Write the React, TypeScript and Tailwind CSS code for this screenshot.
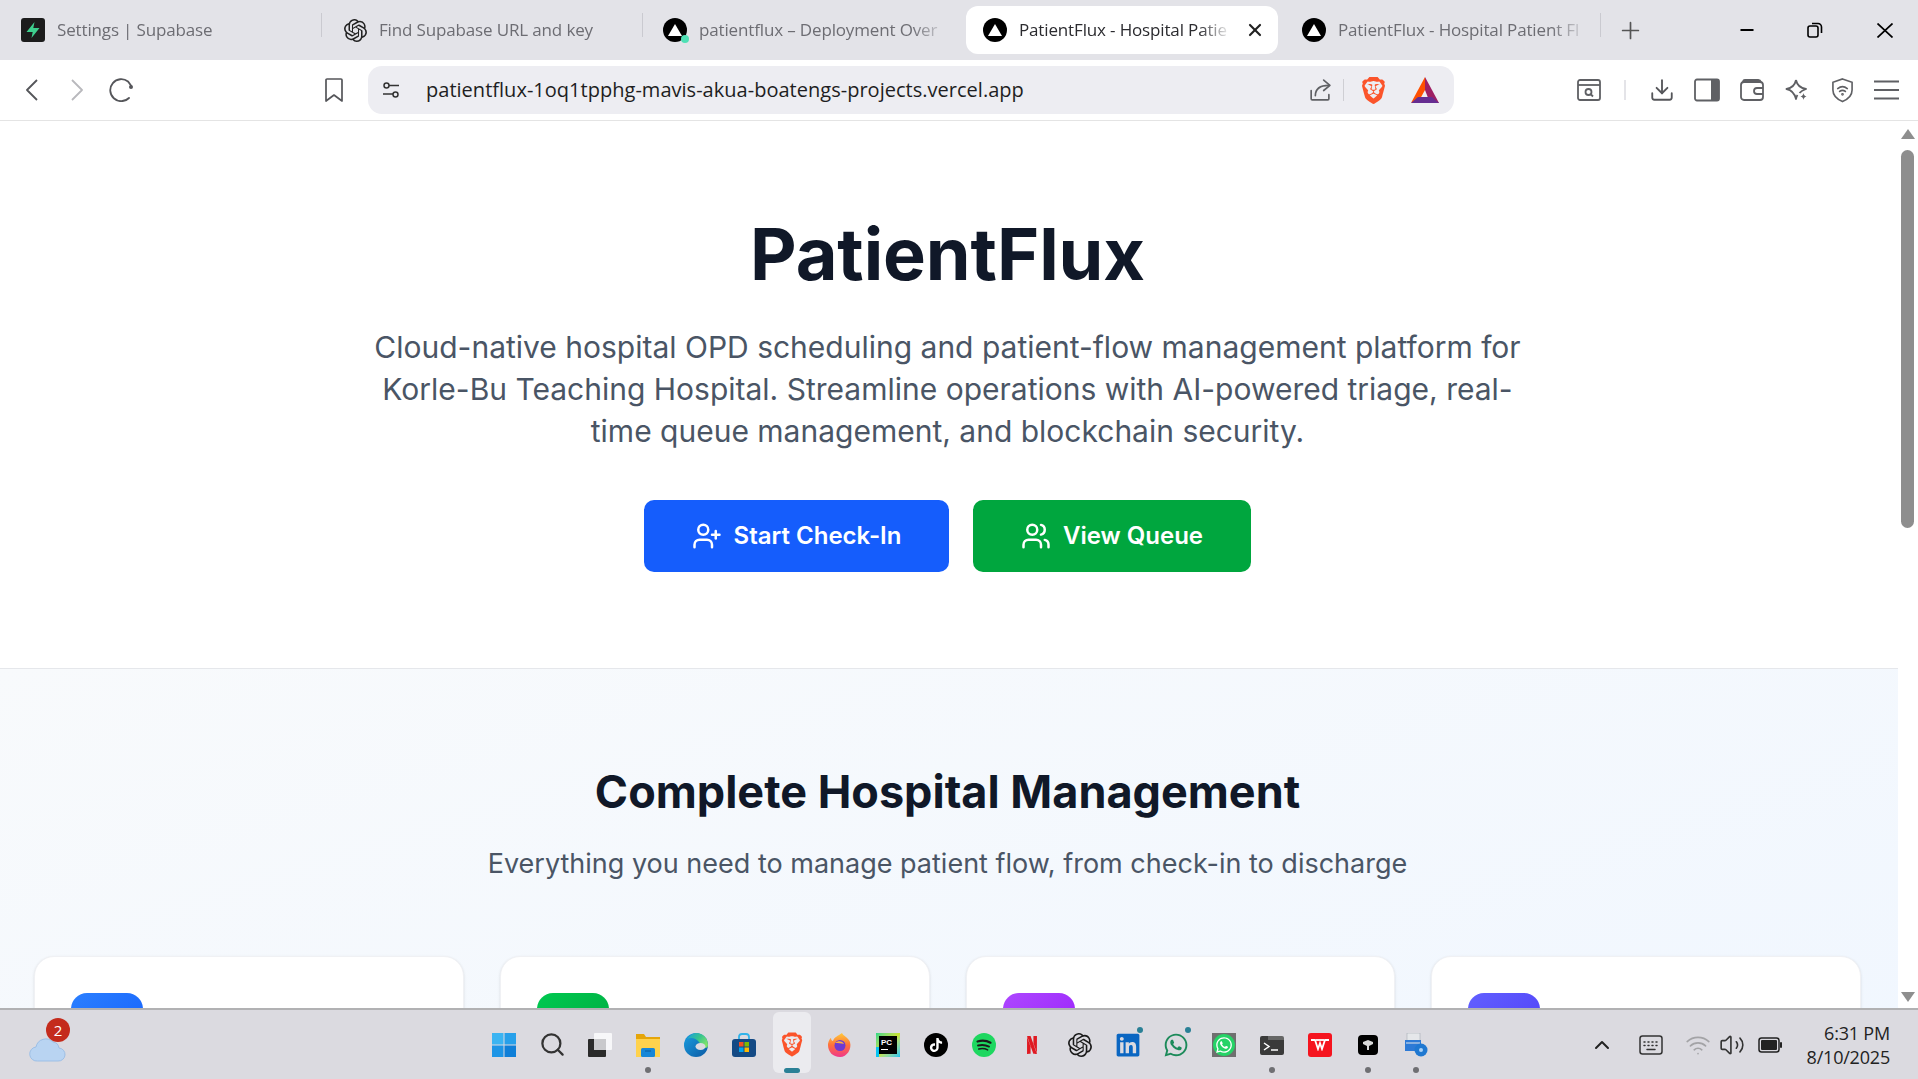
import React from "react";
import { X, Plus, Minus, Download, UserPlus, Users, Search, ChevronUp, Volume2, Wifi } from "lucide-react";
import { SiNetflix, SiOpenai, SiTiktok, SiBrave } from "react-icons/si";
import { FaWhatsapp, FaLinkedin } from "react-icons/fa";

const Vercel = ({ dot }: { dot?: boolean }) => (
  <span className="relative shrink-0 w-6 h-6">
    <svg viewBox="0 0 24 24" className="w-6 h-6">
      <circle cx="12" cy="12" r="12" fill="#000" />
      <path d="M12 6 19 18H5Z" fill="#fff" />
    </svg>
    {dot && <span className="absolute right-[-2px] bottom-[-1px] w-2 h-2 rounded-full bg-[#4fe0b5]" />}
  </span>
);

const Supabase = () => (
  <svg viewBox="0 0 24 24" className="w-6 h-6 shrink-0">
    <rect width="24" height="24" rx="3" fill="#1c1c1c" />
    <path d="M13.500 4 5.500 14h6.200L10.500 20l8-10h-6.200Z" fill="#3ecf8e" />
  </svg>
);

function Tab({ icon, title, w, sep = true }: { icon: React.ReactNode; title: string; w: string; sep?: boolean }) {
  return (
    <div className={`${w} h-12 flex items-center shrink-0 relative`}>
      {icon}
      <span className="ml-3 w-[250px] whitespace-nowrap overflow-hidden text-[17px] font-['Open_Sans',sans-serif] tracking-[-0.15px] text-[#6d6d73] [mask-image:linear-gradient(to_right,black_85%,transparent)]">{title}</span>
      {sep && <span className="absolute right-0 top-[7px] w-px h-6 bg-[#cacad0]" />}
    </div>
  );
}

const G = "#5f6064";

const ToolIcon = ({ children, className = "" }: { children: React.ReactNode; className?: string }) => (
  <span className={`shrink-0 flex items-center justify-center ${className}`}>{children}</span>
);

const BraveIcon = ({ s = 27 }: { s?: number }) => <SiBrave size={s} color="#fb542b" />;

const Bat = () => (
  <svg viewBox="0 0 28 26" className="w-7 h-[26px]">
    <path d="M14 0 28 26H19L14 13Z" fill="#9e1f63" />
    <path d="M14 0 0 26 9 22 14 13Z" fill="#ff5000" />
    <path d="M0 26 7 20H21L28 26Z" fill="#662d91" />
  </svg>
);

function TaskIcon({ children, dot, badge, active }: { children: React.ReactNode; dot?: boolean; badge?: boolean; active?: boolean }) {
  return (
    <div className="relative w-12 h-full flex items-center justify-center shrink-0">
      {active && <span className="absolute left-[5px] right-[5px] top-[2px] bottom-[6px] rounded-md bg-[#ebebef]" />}
      {active && <span className="absolute left-4 right-4 bottom-[6px] h-[5px] rounded-full bg-[#2a8096]" />}
      <span className="relative flex items-center justify-center w-6 h-6">{children}</span>
      {dot && <span className="absolute left-[21px] bottom-[6px] w-[6px] h-[6px] rounded-full bg-[#6f6f73]" />}
      {badge && <span className="absolute left-[33px] top-[17px] w-[6px] h-[6px] rounded-full bg-[#2a8096]" />}
    </div>
  );
}

const cards = [
  "from-[#2b7fff] to-[#155dfc]",
  "from-[#00c950] to-[#00a63e]",
  "from-[#ad46ff] to-[#9810fa]",
  "from-[#615fff] to-[#4f39f6]",
];

export default function App() {
  return (
    <div className="h-screen w-full overflow-hidden flex flex-col bg-white font-['Inter',sans-serif]">
      {/* tab strip */}
      <div className="h-[60px] shrink-0 bg-[#e3e3e8] flex items-center pl-[21px] pr-0">
        <Tab w="w-[301px]" icon={<Supabase />} title="Settings | Supabase" />
        <div className="w-[22px] shrink-0" />
        <Tab w="w-[299px]" icon={<SiOpenai size={23} color="#222" />} title="Find Supabase URL and key" />
        <div className="w-[20px] shrink-0" />
        <Tab w="w-[300px]" icon={<Vercel dot />} title="patientflux – Deployment Over" sep={false} />
        <div className="w-[3px] shrink-0" />
        <div className="w-[312px] h-12 shrink-0 bg-white rounded-xl pl-[17px] flex items-center">
          <Vercel />
          <span className="ml-3 w-[212px] whitespace-nowrap overflow-hidden text-[17px] text-[#2b2b2f] font-['Open_Sans',sans-serif] tracking-[-0.15px] [mask-image:linear-gradient(to_right,black_85%,transparent)]">PatientFlux - Hospital Patie</span>
          <X className="ml-[14px] w-[20px] h-[20px] text-[#222]" strokeWidth={2.6} />
        </div>
        <div className="w-6 shrink-0" />
        <Tab w="w-[299px]" icon={<Vercel />} title="PatientFlux - Hospital Patient Fl" />
        <Plus className="ml-[16px] w-[27px] h-[27px] text-[#555]" strokeWidth={1.5} />
        <Minus className="ml-[93px] w-[20px] h-[20px] text-black" strokeWidth={2.2} />
        <svg viewBox="0 0 16 16" className="ml-[50px] w-[16px] h-[16px]" fill="none" stroke="#000" strokeWidth="1.6">
          <rect x="1" y="4" width="10" height="11" rx="2" />
          <path d="M5 1.500h6a3.500 3.500 0 0 1 3.500 3.500v6" />
        </svg>
        <svg viewBox="0 0 16 15" className="ml-[54px] w-4 h-[15px]" fill="none" stroke="#000" strokeWidth="1.7"><path d="m.5.500 15 14M15.500.500l-15 14" /></svg>
      </div>

      {/* toolbar */}
      <div className="h-[61px] shrink-0 bg-white border-b border-[#e4e4e4] flex items-center pl-[26px]">
        <svg viewBox="0 0 12 22" className="w-3 h-[22px] shrink-0" fill="none" stroke="#55565a" strokeWidth="1.8" strokeLinejoin="round"><path d="M11 1 1 11l10 10" /></svg>
        <svg viewBox="0 0 12 22" className="ml-[33px] w-3 h-[22px] shrink-0" fill="none" stroke="#b9b9bd" strokeWidth="1.8" strokeLinejoin="round"><path d="m1 1 10 10L1 21" /></svg>
        <svg viewBox="0 0 26 24" className="ml-[26px] w-[26px] h-6 shrink-0" fill="none" stroke="#55565a" strokeWidth="1.8" strokeLinecap="round">
          <path d="M20 20a11 11 0 1 1-1-16.500l3 4" /><circle cx="22" cy="9" r="2" fill="#55565a" stroke="none" />
        </svg>
        <svg viewBox="0 0 18 24" className="ml-[190px] w-[18px] h-6 shrink-0" fill="none" stroke="#55565a" strokeWidth="1.7" strokeLinejoin="round"><path d="M2 1h14a1 1 0 0 1 1 1v21l-8-6-8 6V2a1 1 0 0 1 1-1Z" /></svg>
        <div className="ml-[25px] w-[1086px] h-12 rounded-[14px] bg-[#ededf2] flex items-center shrink-0">
          <svg viewBox="0 0 18 18" className="ml-[14px] w-[18px] h-[18px] shrink-0" fill="none" stroke="#333" strokeWidth="1.5">
            <circle cx="4.500" cy="4.500" r="2.500" /><path d="M7 4.500h10M1 13h10" /><circle cx="13.500" cy="13.500" r="2.500" />
          </svg>
          <span className="ml-[26px] w-[640px] text-[20px] text-[#1e1e22] whitespace-nowrap font-['Open_Sans',sans-serif] tracking-[0.02px]">patientflux-1oq1tpphg-mavis-akua-boatengs-projects.vercel.app</span>
          <svg viewBox="0 0 24 24" className="ml-[241px] w-[25px] h-[25px] shrink-0" fill="none" stroke={G} strokeWidth="1.6" strokeLinecap="round" strokeLinejoin="round">
            <path d="M4 12v8a1 1 0 0 0 1 1h15a1 1 0 0 0 1-1v-4" /><path d="M8 17c0-6 4-10 13-10" /><path d="M16 2l6 5-6 5" />
          </svg>
          <span className="ml-[11px] w-px h-[22px] bg-[#cfcfd4] shrink-0" />
          <span className="ml-4 flex shrink-0"><BraveIcon /></span>
          <span className="ml-[24px] flex shrink-0"><Bat /></span>
        </div>
        <ToolIcon className="ml-[123px]">
          <svg viewBox="0 0 24 24" className="w-6 h-6" fill="none" stroke={G} strokeWidth="1.8">
            <rect x="1" y="2" width="22" height="20" rx="2" /><path d="M1 7h22" /><circle cx="11.500" cy="14" r="3" /><path d="m14 16.500 2 2" />
          </svg>
        </ToolIcon>
        <span className="ml-[23px] w-[2px] h-[20px] bg-[#e4e4e8] shrink-0" />
        <Download className="ml-[23px] w-[26px] h-[26px] text-[#55565a] shrink-0" strokeWidth={1.7} />
        <svg viewBox="0 0 26 24" className="ml-[19px] w-[26px] h-6 shrink-0">
          <rect x="1" y="1.500" width="24" height="21" rx="2" fill="none" stroke={G} strokeWidth="1.8" />
          <path d="M17 1.500h6a2 2 0 0 1 2 2v17a2 2 0 0 1-2 2h-6Z" fill={G} />
        </svg>
        <svg viewBox="0 0 24 24" className="ml-[20px] w-6 h-6 shrink-0" fill="none" stroke={G} strokeWidth="1.8">
          <rect x="1" y="4" width="22" height="18" rx="3" /><path d="M3 4V3.500A2 2 0 0 1 5 2h13a3 3 0 0 1 3 2" /><path d="M23 10h-6a3 3 0 0 0 0 6h6" />
        </svg>
        <svg viewBox="0 0 24 24" className="ml-[21px] w-6 h-[26px] shrink-0" fill="none" stroke={G} strokeWidth="1.8" strokeLinejoin="round">
          <path d="M11 2c1 5 4 8 10 9-3 1-5 2-6.500 4M11 2c-1 5-4 8-9.500 9 5 1 8 4 9.500 10 .3-1.500.8-3 1.500-4" />
          <path d="M18.500 15c.3 2 1 3 3 3.500-2 .5-2.700 1.500-3 3.500-.3-2-1-3-3-3.500 2-.5 2.700-1.500 3-3.500Z" fill={G} stroke="none" />
        </svg>
        <svg viewBox="0 0 24 26" className="ml-[22px] w-[23px] h-[26px] shrink-0" fill="none" stroke={G} strokeWidth="1.7" strokeLinecap="round">
          <path d="M12 1.500 22 5v8c0 6-4 9.500-10 12C6 22.500 2 19 2 13V5Z" />
          <path d="M7 11.500c3-2.500 7-2.500 10 0M9 14.500c2-1.500 4-1.500 6 0" /><circle cx="12" cy="17.500" r=".6" />
        </svg>
        <svg viewBox="0 0 25 20" className="ml-[20px] w-[25px] h-[20px] shrink-0" fill="none" stroke={G} strokeWidth="2"><path d="M0 1.500h25M0 10h25M0 18.500h25" /></svg>
      </div>

      {/* page */}
      <div className="flex-1 min-h-0 flex overflow-hidden">
        <main className="flex-1 min-w-0 overflow-hidden">
          <section className="h-[548px] border-b border-[#e5e7eb] bg-white flex flex-col items-center pt-[97px] pr-[3px]">
            <h1 className="text-[72px] leading-[72px] font-bold text-[#101828] tracking-[-0.1px]">PatientFlux</h1>
            <p className="mt-[36px] w-[1170px] text-center text-[30px] leading-[42px] text-[#4a5565]">
              Cloud-native hospital OPD scheduling and patient-flow management platform for Korle-Bu Teaching Hospital. Streamline operations with AI-powered triage, real-time queue management, and blockchain security.
            </p>
            <div className="mt-[48px] flex gap-6">
              <button className="w-[305px] h-[72px] rounded-[10px] bg-[#155dfc] text-white flex items-center justify-center gap-3 text-[24px] font-semibold">
                <UserPlus className="w-[30px] h-[30px]" strokeWidth={2} />Start Check-In
              </button>
              <button className="w-[278px] h-[72px] rounded-[10px] bg-[#00a63e] text-white flex items-center justify-center gap-3 text-[24px] font-semibold">
                <Users className="w-[30px] h-[30px]" strokeWidth={2} />View Queue
              </button>
            </div>
          </section>
          <section className="h-[600px] bg-gradient-to-br from-[#f8fafc] to-[#eff6ff] pl-[34px] pr-[37px] pt-[98px] flex flex-col items-center">
            <h2 className="text-[45px] leading-[50px] font-bold text-[#101828]">Complete Hospital Management</h2>
            <p className="mt-[29px] text-[27px] leading-[36px] text-[#4a5565]">Everything you need to manage patient flow, from check-in to discharge</p>
            <div className="mt-[74px] w-full grid grid-cols-4 gap-9">
              {cards.map((c) => (
                <div key={c} className="h-[300px] rounded-[20px] bg-white border border-[#f0f1f4] shadow-sm p-9">
                  <div className={`w-[72px] h-[72px] rounded-2xl bg-gradient-to-br ${c}`} />
                </div>
              ))}
            </div>
          </section>
        </main>
        {/* scrollbar */}
        <div className="w-5 shrink-0 bg-white flex flex-col items-center pt-[8px] pb-[6px]">
          <span className="w-0 h-0 border-x-[7px] border-x-transparent border-b-[10px] border-b-[#8e8e8e]" />
          <span className="mt-[11px] w-[13px] h-[378px] rounded-full bg-[#8e8e8e] -translate-x-px" />
          <span className="mt-auto w-0 h-0 border-x-[7px] border-x-transparent border-t-[10px] border-t-[#8e8e8e]" />
        </div>
      </div>

      {/* taskbar */}
      <div className="h-[71px] shrink-0 border-t-2 border-[#b1b1b3] bg-[#dbdae0] flex items-stretch">
        <div className="w-[480px] shrink-0 pl-[29px] flex items-center">
          <div className="relative w-[41px] h-[44px] mb-[10px]">
            <svg viewBox="0 0 36 26" className="absolute left-0 bottom-0 w-[37px] h-[26px]">
              <path d="M8 25a7 7 0 0 1-1.500-14 10 10 0 0 1 17-5 7 7 0 0 1 6 6 6.500 6.500 0 0 1-1 13Z" fill="#b9d4f2" stroke="#9dbfe6" strokeWidth="1" />
            </svg>
            <span className="absolute left-[17px] top-0 w-6 h-6 rounded-full bg-[#c42b1c] text-white text-[15px] leading-6 text-center font-['Open_Sans',sans-serif]">2</span>
          </div>
        </div>

        <TaskIcon>
          <svg viewBox="0 0 24 24" className="w-6 h-6">
            <path d="M0 0h11.500v11.500H0Z" fill="#3bb4f2" /><path d="M12.500 0H24v11.500H12.500Z" fill="#27a0ea" /><path d="M0 12.500h11.500V24H0Z" fill="#1d95e6" /><path d="M12.500 12.500H24V24H12.500Z" fill="#0f7fd8" />
          </svg>
        </TaskIcon>
        <TaskIcon><Search className="w-[27px] h-[27px] shrink-0 text-[#333]" strokeWidth={2} /></TaskIcon>
        <TaskIcon>
          <svg viewBox="0 0 24 24" className="w-6 h-6">
            <rect x="6" y="0" width="18" height="17" rx="1" fill="#f7f7f9" /><rect x="0" y="6" width="18" height="18" rx="1" fill="#2a2a2a" /><rect x="6" y="6" width="12" height="11" fill="#c9c9cc" />
          </svg>
        </TaskIcon>
        <TaskIcon dot>
          <svg viewBox="0 0 24 24" className="w-6 h-6">
            <path d="M0 1h8l2 3h14v20H0Z" fill="#e5a50a" /><path d="M0 6h24v18H0Z" fill="#ffd24d" /><rect x="5" y="15" width="14" height="9" rx="1.500" fill="#1787d8" /><path d="M9 18h6" stroke="#0d5a9c" strokeWidth="1" />
          </svg>
        </TaskIcon>
        <TaskIcon>
          <svg viewBox="0 0 24 24" className="w-6 h-6">
            <defs>
              <linearGradient id="e1" x1="0" y1="0" x2="1" y2="1"><stop offset="0" stopColor="#1a9fe0" /><stop offset="1" stopColor="#0c59a4" /></linearGradient>
              <linearGradient id="e2" x1="0" y1="0" x2="1" y2="0.600"><stop offset="0" stopColor="#1b9de2" /><stop offset=".55" stopColor="#35c48f" /><stop offset="1" stopColor="#7ee26a" /></linearGradient>
            </defs>
            <circle cx="12" cy="12" r="12" fill="url(#e1)" />
            <path d="M3 6C6 2 9 0 12 0c7 0 12 5 12 12 0 2-1 3-3 3-4 0-4-3-6-6C12 5 7 4 3 6Z" fill="url(#e2)" />
            <ellipse cx="16.500" cy="13.500" rx="5" ry="3.500" fill="#dbdae0" />
          </svg>
        </TaskIcon>
        <TaskIcon>
          <svg viewBox="0 0 24 24" className="w-6 h-6">
            <path d="M7 6V4a3 3 0 0 1 3-3h4a3 3 0 0 1 3 3v2" fill="none" stroke="#31b3ea" strokeWidth="1.800" />
            <rect x="0" y="6" width="24" height="18" rx="3" fill="#144a85" />
            <rect x="7" y="9" width="4.500" height="4.500" fill="#f25022" /><rect x="12.500" y="9" width="4.500" height="4.500" fill="#7fba00" /><rect x="7" y="14.500" width="4.500" height="4.500" fill="#00a4ef" /><rect x="12.500" y="14.500" width="4.500" height="4.500" fill="#ffb900" />
          </svg>
        </TaskIcon>
        <TaskIcon active><BraveIcon /></TaskIcon>
        <TaskIcon>
          <svg viewBox="0 0 24 24" className="w-6 h-6">
            <defs><linearGradient id="ff" x1="0" y1="0" x2="0" y2="1"><stop offset="0" stopColor="#ffca3a" /><stop offset=".5" stopColor="#ff7139" /><stop offset="1" stopColor="#f0368c" /></linearGradient></defs>
            <path d="M14 0c1 3 6 4 8 9 2 7-3 15-10 15C5 24 0 19 0 12 0 9 2 5 3 5c0 2 1 3 2 3 1-4 5-5 9-8Z" fill="url(#ff)" />
            <circle cx="12" cy="12.500" r="5.500" fill="#6f3ad1" /><path d="M7 10c3-3 8-2 9 1-3-1-6-1-9-1Z" fill="#ffb13b" />
          </svg>
        </TaskIcon>
        <TaskIcon>
          <div className="relative w-6 h-6 bg-gradient-to-br from-[#21d789] via-[#c7e22f] to-[#07c3f2]">
            <div className="absolute left-0 bottom-0 w-[3px] h-[10px] bg-[#07c3f2]" />
            <div className="absolute left-[3px] top-[3px] w-[18px] h-[18px] bg-black text-white text-[8px] leading-[9px] font-bold pl-[2px] pt-[2px] font-['Liberation_Sans',sans-serif]">PC<div className="mt-[2px] w-[7px] h-px bg-white" /></div>
          </div>
        </TaskIcon>
        <TaskIcon>
          <span className="w-6 h-6 rounded-full bg-black flex items-center justify-center"><SiTiktok size={14} color="#fff" /></span>
        </TaskIcon>
        <TaskIcon>
          <svg viewBox="0 0 24 24" className="w-6 h-6" fill="none" stroke="#1a1a1a" strokeLinecap="round">
            <circle cx="12" cy="12" r="12" fill="#1ed760" stroke="none" />
            <path d="M5.500 8.500c4.500-1.300 9-1 13 1.200" strokeWidth="2.200" /><path d="M6 12.500c4-1 7.500-.7 11 1.100" strokeWidth="1.900" /><path d="M6.800 16c3.300-.8 6-.6 8.800.9" strokeWidth="1.600" />
          </svg>
        </TaskIcon>
        <TaskIcon><SiNetflix size={18} color="#e01a22" /></TaskIcon>
        <TaskIcon><SiOpenai size={24} color="#1a1a1a" /></TaskIcon>
        <TaskIcon badge><FaLinkedin size={26} color="#0a66c2" /></TaskIcon>
        <TaskIcon badge><FaWhatsapp size={26} color="#1c8a5a" /></TaskIcon>
        <TaskIcon>
          <span className="w-6 h-6 bg-[#6f6f6f] flex items-center justify-center"><span className="w-[22px] h-[22px] rounded-full bg-[#25d366] flex items-center justify-center"><FaWhatsapp size={18} color="#fff" /></span></span>
        </TaskIcon>
        <TaskIcon dot>
          <svg viewBox="0 0 24 20" className="w-6 h-5">
            <path d="M0 3a2 2 0 0 1 2-2h7l2 2h11a2 2 0 0 1 2 2v13a2 2 0 0 1-2 2H2a2 2 0 0 1-2-2Z" fill="#3a3a3a" /><path d="M8 1h14a2 2 0 0 1 2 2v2H8Z" fill="#666" />
            <path d="M4 8l5 3.500L4 15" fill="none" stroke="#fff" strokeWidth="1.500" /><path d="M11 15h7" stroke="#fff" strokeWidth="1.500" />
          </svg>
        </TaskIcon>
        <TaskIcon>
          <span className="w-6 h-6 rounded-[3px] bg-[#f5141f] flex items-center justify-center">
            <svg viewBox="0 0 18 12" className="w-[18px] h-3" fill="none" stroke="#fff" strokeWidth="1.800"><path d="M0 1h4l3 9 2-6 2 6 3-9h4" /><path d="M5 1h8" /></svg>
          </span>
        </TaskIcon>
        <TaskIcon dot>
          <span className="w-5 h-5 rounded-[4px] bg-black flex items-center justify-center">
            <svg viewBox="0 0 12 12" className="w-3 h-3"><path d="M1 3 6 1l5 2v2L7 7v4H5V7L1 5Z" fill="#d8d8d8" /></svg>
          </span>
        </TaskIcon>
        <TaskIcon dot>
          <svg viewBox="0 0 24 24" className="w-6 h-6">
            <rect x="3" y="0" width="13" height="8" fill="#e5e7ea" stroke="#9aa3ad" strokeWidth=".5" /><rect x="1" y="7" width="16" height="11" fill="#2d7ad6" /><path d="M2 10h14" stroke="#e5e7ea" /><circle cx="17" cy="17" r="6.500" fill="#1f78d1" /><circle cx="17" cy="17" r="2" fill="#a9d1f7" />
          </svg>
        </TaskIcon>

        <div className="flex-1 min-w-0 flex items-center pl-[150px]">
          <ChevronUp className="w-6 h-6 text-[#222] shrink-0" strokeWidth={2} />
          <svg viewBox="0 0 24 20" className="ml-[25px] w-6 h-5 shrink-0" fill="none" stroke="#333" strokeWidth="1.500">
            <rect x="1" y="1" width="22" height="18" rx="2.500" /><path d="M5 7h1M9 7h1M13 7h1M17 7h1M5 10.500h1M9 10.500h1M13 10.500h1M17 10.500h1M8 14.500h8" strokeLinecap="round" />
          </svg>
          <Wifi className="ml-[22px] w-[26px] h-[26px] text-[#a3a3a6] shrink-0" strokeWidth={1.5} />
          <Volume2 className="ml-[8px] w-[26px] h-[26px] text-[#333] shrink-0" strokeWidth={1.5} />
          <svg viewBox="0 0 24 16" className="ml-[13px] w-6 h-4 shrink-0">
            <rect x="1" y="1" width="20" height="14" rx="2.500" fill="none" stroke="#222" strokeWidth="1.500" /><rect x="3" y="3" width="16" height="10" rx="1" fill="#222" /><rect x="22" y="5" width="2" height="6" rx="1" fill="#222" />
          </svg>
          <div className="ml-auto pr-[28px] text-right text-[18px] leading-[24px] text-[#222] whitespace-nowrap font-['Open_Sans',sans-serif] tracking-[-0.2px]">
            <div>6:31 PM</div>
            <div>8/10/2025</div>
          </div>
        </div>
      </div>
    </div>
  );
}
